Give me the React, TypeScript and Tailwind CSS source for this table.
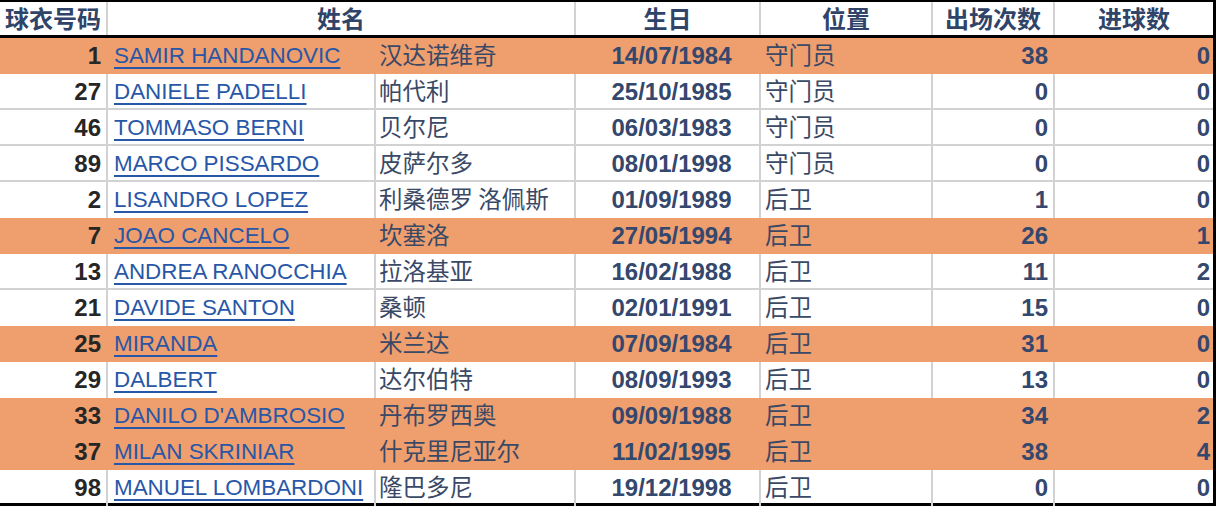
import React from "react";

type Player = {
  no: number;
  name: string;
  cn: string;
  birth: string;
  pos: string;
  apps: number;
  goals: number;
  hl?: boolean;
};

const players: Player[] = [
  { no: 1, name: "SAMIR HANDANOVIC", cn: "汉达诺维奇", birth: "14/07/1984", pos: "守门员", apps: 38, goals: 0, hl: true },
  { no: 27, name: "DANIELE PADELLI", cn: "帕代利", birth: "25/10/1985", pos: "守门员", apps: 0, goals: 0 },
  { no: 46, name: "TOMMASO BERNI", cn: "贝尔尼", birth: "06/03/1983", pos: "守门员", apps: 0, goals: 0 },
  { no: 89, name: "MARCO PISSARDO", cn: "皮萨尔多", birth: "08/01/1998", pos: "守门员", apps: 0, goals: 0 },
  { no: 2, name: "LISANDRO LOPEZ", cn: "利桑德罗 洛佩斯", birth: "01/09/1989", pos: "后卫", apps: 1, goals: 0 },
  { no: 7, name: "JOAO CANCELO", cn: "坎塞洛", birth: "27/05/1994", pos: "后卫", apps: 26, goals: 1, hl: true },
  { no: 13, name: "ANDREA RANOCCHIA", cn: "拉洛基亚", birth: "16/02/1988", pos: "后卫", apps: 11, goals: 2 },
  { no: 21, name: "DAVIDE SANTON", cn: "桑顿", birth: "02/01/1991", pos: "后卫", apps: 15, goals: 0 },
  { no: 25, name: "MIRANDA", cn: "米兰达", birth: "07/09/1984", pos: "后卫", apps: 31, goals: 0, hl: true },
  { no: 29, name: "DALBERT", cn: "达尔伯特", birth: "08/09/1993", pos: "后卫", apps: 13, goals: 0 },
  { no: 33, name: "DANILO D'AMBROSIO", cn: "丹布罗西奥", birth: "09/09/1988", pos: "后卫", apps: 34, goals: 2, hl: true },
  { no: 37, name: "MILAN SKRINIAR", cn: "什克里尼亚尔", birth: "11/02/1995", pos: "后卫", apps: 38, goals: 4, hl: true },
  { no: 98, name: "MANUEL LOMBARDONI", cn: "隆巴多尼", birth: "19/12/1998", pos: "后卫", apps: 0, goals: 0 },
];

const cols = "grid grid-cols-[108px_268px_200px_185px_172px_122px_158px]";
const cjk = "font-['Noto_Sans_CJK_SC',sans-serif]";
const latin = "font-['Liberation_Sans',Arial,sans-serif]";

export default function App() {
  return (
    <div className="h-[506px] w-[1216px] overflow-hidden bg-white">
      <div className="border-r-[3px] border-t-2 border-b-[3px] border-black">
        <div className={`${cols} h-[36px] border-b-[3px] border-black text-[24px] font-bold leading-none text-[#2f4468] ${cjk}`}>
          <div className="flex items-center justify-center border-r-2 border-[#d2d2d2] pb-[2px]">球衣号码</div>
          <div className="col-span-2 flex items-center justify-center border-r-2 border-[#d2d2d2] pb-[2px]">姓名</div>
          <div className="flex items-center justify-center border-r-2 border-[#d2d2d2] pb-[2px]">生日</div>
          <div className="flex items-center justify-center border-r-2 border-[#d2d2d2] pb-[2px]">位置</div>
          <div className="flex items-center justify-center border-r-2 border-[#d2d2d2] pb-[2px]">出场次数</div>
          <div className="flex items-center justify-center pb-[2px]">进球数</div>
        </div>
        {players.map((p, i) => (
          <Row key={p.no} p={p} last={i === players.length - 1} nextHl={players[i + 1]?.hl} />
        ))}
      </div>
    </div>
  );
}

function Row({ p, last, nextHl }: { p: Player; last: boolean; nextHl?: boolean }) {
  const line = p.hl ? "border-[#ef9e6d]" : "border-[#d2d2d2]";
  const bottom = last ? "h-[33px]" : p.hl || nextHl ? "h-[36px]" : "h-[36px] border-b-2 border-[#d2d2d2]";
  const cell = `flex items-center border-r-2 ${line}`;
  return (
    <div className={`${cols} ${bottom} ${p.hl ? "bg-[#ef9e6d]" : "bg-white"}`}>
      <div className={`${cell} justify-end pr-[5px] text-[24px] font-bold text-[#262626] ${latin}`}>{p.no}</div>
      <div className={`${cell} pl-[6px] text-[22.4px] ${latin}`}>
        <a href="#" className="text-[#2857a8] underline decoration-2 underline-offset-[4px]">
          {p.name}
        </a>
      </div>
      <div className={`${cell} pb-[3px] pl-[3px] text-[23.5px] leading-none text-[#3a4966] ${cjk}`}>{p.cn}</div>
      <div className={`${cell} justify-center pl-2 text-[24px] font-bold text-[#34476d] ${latin}`}>{p.birth}</div>
      <div className={`${cell} pb-[3px] pl-[4px] text-[23.5px] leading-none text-[#3a4966] ${cjk}`}>{p.pos}</div>
      <div className={`${cell} justify-end pr-[5px] text-[24px] font-bold text-[#34476d] ${latin}`}>{p.apps}</div>
      <div className={`flex items-center justify-end pr-[3px] text-[24px] font-bold text-[#34476d] ${latin}`}>{p.goals}</div>
    </div>
  );
}
